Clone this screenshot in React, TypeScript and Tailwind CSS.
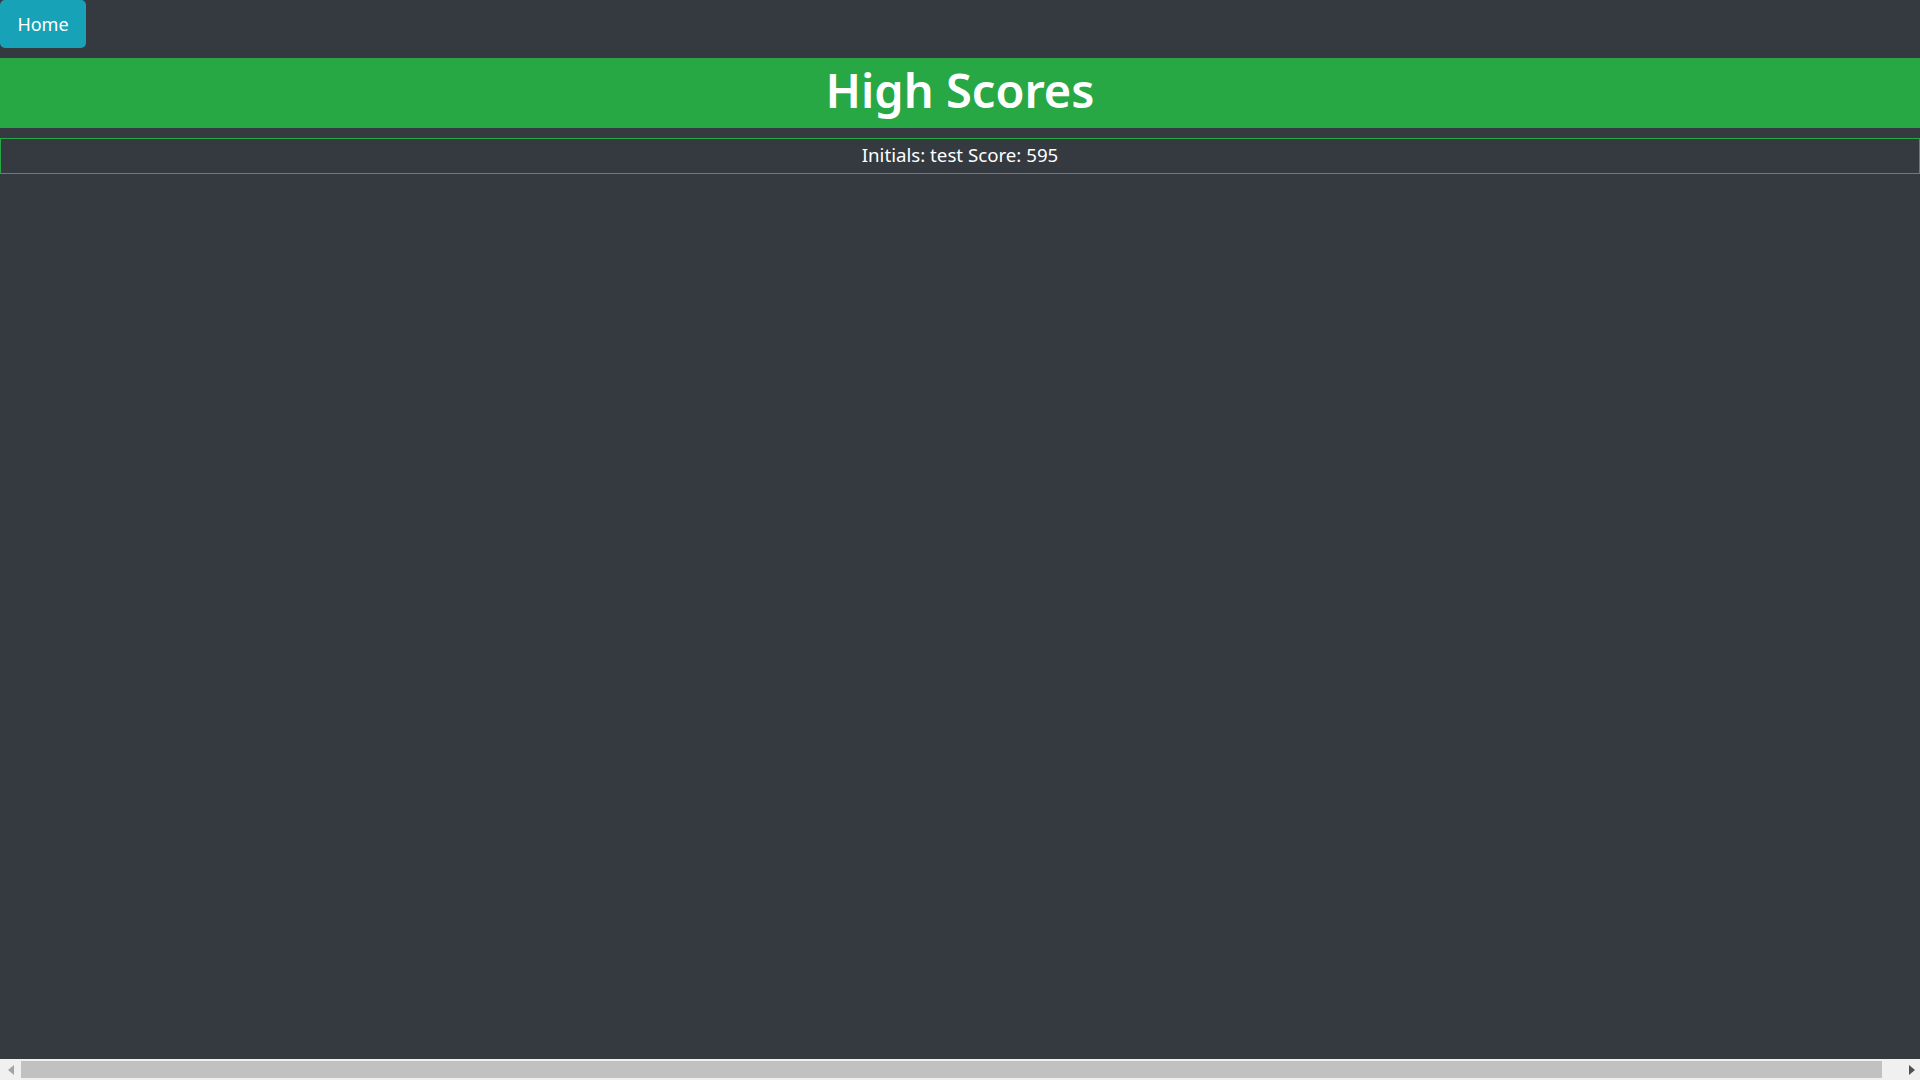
import React from "react";

const font = { fontFamily: '"Noto Sans", "Open Sans", sans-serif' };

const scores = [{ initials: "test", score: 595 }];

export default function App() {
  return (
    <div className="h-screen w-full flex flex-col bg-[#343a40] text-white overflow-hidden" style={font}>
      <div className="flex-1 flex flex-col">
        <div>
          <button className="h-[48px] w-[86px] bg-[#17a2b8] text-white text-[18px] leading-none rounded-[5px] pb-[1px]">
            Home
          </button>
        </div>
        <h1 className="mt-[10px] h-[70px] bg-[#28a745] flex items-center justify-center text-[47px] font-semibold leading-none pb-[6px]">
          High Scores
        </h1>
        <ul className="mt-[10px]">
          {scores.map((s, i) => (
            <li
              key={i}
              className="h-[36px] border border-[#28a745] flex items-center justify-center text-[18.7px] pb-[2px]"
            >
              Initials: {s.initials} Score: {s.score}
            </li>
          ))}
        </ul>
      </div>
      {/* horizontal scrollbar */}
      <div className="h-[21px] bg-[#f0f0f0] flex items-center">
        <div className="w-[21px] h-full flex items-center justify-center">
          <svg width="6" height="10" viewBox="0 0 6 10">
            <path d="M6 0 L0 5 L6 10 Z" fill="#a3a3a3" />
          </svg>
        </div>
        <div className="flex-1 h-[17px] pr-[21px]">
          <div className="h-full bg-[#c1c1c1]" />
        </div>
        <div className="w-[17px] h-full flex items-center justify-center">
          <svg width="6" height="10" viewBox="0 0 6 10">
            <path d="M0 0 L6 5 L0 10 Z" fill="#505050" />
          </svg>
        </div>
      </div>
    </div>
  );
}
